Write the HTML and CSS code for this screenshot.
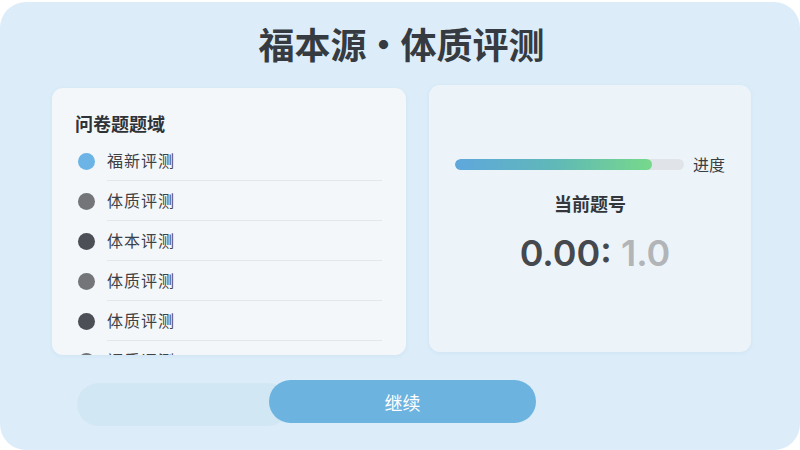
FILE: index.html
```html
<!DOCTYPE html>
<html lang="zh-CN">
<head>
    <meta charset="UTF-8">
    <meta name="viewport" content="width=device-width, initial-scale=1.0">
    <link rel="stylesheet" href="styles.css">
    <title>福本源 · 体质评测</title>
</head>
<body>
    <div class="frame">
        <h1 class="title">福本源<span class="title-dot">·</span>体质评测</h1>

        <div class="panels">
            <div class="card domain-card">
                <h2 class="card-title">问卷题题域</h2>
                <ul class="domain-list">
                    <li class="domain"><span class="dot dot-active"></span><span class="domain-name">福新评测</span></li>
                    <li class="domain"><span class="dot dot-mid"></span><span class="domain-name">体质评测</span></li>
                    <li class="domain"><span class="dot dot-dark"></span><span class="domain-name">体本评测</span></li>
                    <li class="domain"><span class="dot dot-mid"></span><span class="domain-name">体质评测</span></li>
                    <li class="domain"><span class="dot dot-dark"></span><span class="domain-name">体质评测</span></li>
                    <li class="domain"><span class="dot dot-mid"></span><span class="domain-name">福质评测</span></li>
                </ul>
            </div>

            <div class="card status-card">
                <div class="progress-row">
                    <div class="progress-track">
                        <div class="progress-fill" style="width: 86%"></div>
                    </div>
                    <span class="progress-label">进度</span>
                </div>
                <div class="current-label">当前题号</div>
                <div class="current-number">0.00: <span class="total">1.0</span></div>
            </div>
        </div>

        <div class="actions">
            <div class="action-track"></div>
            <button type="button" class="continue-button">继续</button>
        </div>
    </div>
</body>
</html>
```

FILE: styles.css
```css
body {
    margin: 0;
    padding: 0;
    background-color: #fff;
    font-family: "Noto Sans CJK SC", "Noto Sans", sans-serif;
    color: #3b3f45;
}

.frame {
    box-sizing: border-box;
    width: 800px;
    height: 448px;
    margin-top: 2px;
    border-radius: 26px;
    background-color: #dcedf9;
    padding: 0 49px 0 52px;
}

.title {
    margin: 0;
    padding-top: 17px;
    height: 66px;
    box-sizing: border-box;
    text-align: center;
    font-size: 36px;
    line-height: 48px;
    font-weight: 700;
    color: #363b41;
}

.title-dot {
    margin: 0 -1px;
}

.panels {
    display: flex;
    gap: 23px;
    align-items: flex-start;
    margin-top: 17px;
}

.card {
    box-sizing: border-box;
    border-radius: 11px;
    background-color: #f3f7fa;
    box-shadow: 0 1px 4px rgba(120, 160, 190, 0.12);
}

.domain-card {
    width: 354px;
    height: 267px;
    margin-top: 3px;
    padding: 22px 24px 0 23px;
    overflow: hidden;
}

.card-title {
    margin: 0 0 5px;
    font-size: 18px;
    line-height: 26px;
    font-weight: 700;
    color: #2f3338;
}

.domain-list {
    list-style: none;
    margin: 0;
    padding: 0 0 0 3px;
}

.domain {
    display: flex;
    align-items: center;
    height: 40px;
}

.dot {
    flex: none;
    width: 17px;
    height: 17px;
    border-radius: 50%;
    margin-right: 12px;
}

.dot-active {
    background-color: #6cb4e5;
}

.dot-mid {
    background-color: #737579;
}

.dot-dark {
    background-color: #4c4f55;
}

.domain-name {
    flex: 1;
    height: 40px;
    line-height: 38px;
    font-size: 16px;
    letter-spacing: 1px;
    color: #3e4146;
    border-bottom: 1px solid #e3e7ea;
    box-sizing: border-box;
}

.status-card {
    width: 322px;
    height: 267px;
    padding: 67px 26px 0 26px;
    background-color: #edf4f9;
}

.progress-row {
    display: flex;
    align-items: center;
    gap: 9px;
}

.progress-track {
    flex: 1;
    height: 11px;
    border-radius: 6px;
    background-color: #e0e4e8;
    overflow: hidden;
}

.progress-fill {
    height: 100%;
    border-radius: 6px;
    background: linear-gradient(90deg, #5ea7dd, #60b8b8 50%, #76d98a);
}

.progress-label {
    font-size: 16px;
    line-height: 24px;
    color: #3a3d42;
}

.current-label {
    margin-top: 14px;
    text-align: center;
    font-size: 18px;
    line-height: 26px;
    font-weight: 700;
    color: #33373c;
}

.current-number {
    margin-top: 16px;
    padding-left: 10px;
    text-align: center;
    font-family: Inter, "Liberation Sans", sans-serif;
    font-size: 36px;
    line-height: 42px;
    font-weight: 600;
    color: #45484d;
}

.current-number .total {
    color: #b2b5b8;
}

.actions {
    display: flex;
    align-items: flex-start;
    margin-top: 25px;
    padding-left: 25px;
}

.action-track {
    width: 213px;
    height: 43px;
    margin-top: 3px;
    border-radius: 22px;
    background-color: #d2e7f4;
}

.continue-button {
    width: 267px;
    height: 43px;
    margin-left: -21px;
    border: none;
    border-radius: 22px;
    background-color: #6cb3df;
    color: #fff;
    font-family: "Noto Sans CJK SC", sans-serif;
    font-size: 18px;
    cursor: pointer;
}

.continue-button:hover {
    background-color: #5eaad9;
}
```
